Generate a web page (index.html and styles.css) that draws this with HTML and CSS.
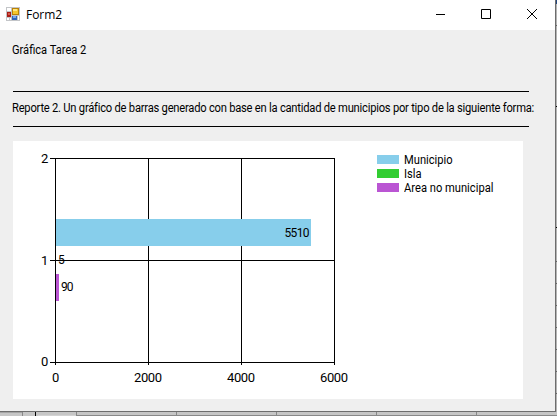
FILE: index.html
```html
<!DOCTYPE html>
<html lang="es">
<head>
<meta charset="utf-8">
<title>Form2</title>
<link rel="stylesheet" href="styles.css">
</head>
<body>
<div class="desktop">
  <main class="window">
    <header class="titlebar">
      <svg class="app-icon" width="14" height="14" viewBox="0 0 14 14" shape-rendering="crispEdges">
        <path fill="#c3c5c8" d="M0 0h14v14H0z"/>
        <path fill="#fff" d="M1 1h4v3H1zM1 11h2v2H1zM4 11h1v2H4zM12 9h1v4h-1z"/>
        <path fill="#a91d16" d="M1 5h4v5H1z"/>
        <path fill="#d6594a" d="M2 6h2v2H2z"/>
        <path fill="#b98108" d="M6 1h7v7H6z"/>
        <path fill="#f4c52d" d="M7 2h5v5H7z"/>
        <path fill="#ffe680" d="M7 2h4v2H7z"/>
        <path fill="#2f64bb" d="M6 9h5v4H6z"/>
        <path fill="#79a7ea" d="M7 9h3v2H7z"/>
      </svg>
      <h1 class="title">Form2</h1>
      <div class="controls">
        <svg width="10" height="10" viewBox="0 0 10 10"><path d="M1 5.5h9"/></svg>
        <svg width="10" height="10" viewBox="0 0 10 10"><path d="M.5.5h9v9h-9z"/></svg>
        <svg width="10" height="10" viewBox="0 0 10 10"><path d="M0 0l10 10M10 0L0 10"/></svg>
      </div>
    </header>
    <p class="heading"><span class="narrow">Gráfica Tarea 2</span></p>
    <p class="report"><span class="narrow">Reporte 2. Un gráfico de barras generado con base en la cantidad de municipios por tipo de la siguiente forma:</span></p>
    <section class="panel">
      <svg class="chart" width="350" height="258" viewBox="13 141 350 258">
        <g class="grid">
          <path d="M50 158.5h285M50 260.5h285M50 362.5h285M55.5 158v207M148.5 158v207M241.5 158v207M334.5 158v207"/>
        </g>
        <path class="municipio" d="M56 219h255v27H56z"/>
        <path class="area" d="M56 274h3v27h-3z"/>
        <g class="axis">
          <text x="41" y="163">2</text>
          <text x="41" y="265">1</text>
          <text x="41" y="366">0</text>
          <text x="52" y="382">0</text>
          <text x="134" y="382" textLength="28">2000</text>
          <text x="227" y="382" textLength="28">4000</text>
          <text x="320" y="382" textLength="28">6000</text>
        </g>
        <g class="value">
          <text x="284.5" y="237" textLength="25">5510</text>
          <text x="58" y="264">5</text>
          <text x="61" y="291" textLength="12.5">90</text>
        </g>
      </svg>
      <ul class="legend">
        <li><i class="swatch municipio"></i><span class="narrow">Municipio</span></li>
        <li><i class="swatch isla"></i><span class="narrow">Isla</span></li>
        <li><i class="swatch area"></i><span class="narrow">Area no municipal</span></li>
      </ul>
    </section>
  </main>
  <svg class="right-edge" width="1" height="412" viewBox="0 0 1 412" shape-rendering="crispEdges">
    <path fill="#b4b4b4" d="M0 0h1v412H0z"/>
    <path fill="#24477f" d="M0 0h1v4H0z"/>
    <path fill="#666" d="M0 25h1v1H0zM0 261h1v1H0zM0 283h1v1H0zM0 305h1v1H0zM0 327h1v1H0zM0 349h1v1H0zM0 371h1v1H0zM0 393h1v1H0z"/>
    <path fill="#000" d="M0 106h1v1H0zM0 227h1v1H0z"/>
  </svg>
  <svg class="bottom-edge" width="557" height="4" viewBox="0 0 557 4" shape-rendering="crispEdges">
    <path fill="#c6c6c6" d="M0 0h557v4H0z"/>
    <path fill="#a5a5a5" d="M0 0h22v1H0z"/>
    <path fill="#d2d2d2" d="M38 3h38v1H38z"/>
    <path fill="#888" d="M22 0h1v4h-1zM76 0h1v4h-1zM176 0h1v4h-1zM276 0h1v4h-1zM376 0h1v4h-1zM476 0h1v4h-1zM76 3h481v1H76z"/>
    <path fill="#000" d="M35 0h1v4h-1z"/>
  </svg>
</div>
</body>
</html>
```
FILE: styles.css
```css
* { box-sizing: border-box; }
body { margin: 0; overflow: hidden; font-family: Roboto, "Liberation Sans", sans-serif; color: #000; }
svg { display: block; }
.desktop { display: grid; grid-template-columns: 556px 1px; grid-template-rows: 412px 4px; width: 557px; height: 416px; }
.bottom-edge { grid-column: 1 / 3; }
.window { background: #efefef; border-right: 1px solid #6d6d6d; border-bottom: 1px solid #6d6d6d; }
.titlebar { display: flex; align-items: center; height: 30px; padding: 0 18px 0 6px; background: #fff; }
.app-icon { margin-bottom: 2px; }
.title { margin: 0 0 0 6px; font: 12px/16px "Open Sans", sans-serif; letter-spacing: -.05px; }
.controls { display: flex; gap: 36px; margin-left: auto; padding-bottom: 2px; }
.controls path { fill: none; stroke: #000; }
.narrow { display: inline-block; transform-origin: 0 50%; transform: scaleX(.93); }
.heading { margin: 12px 0 0 12px; font-size: 12px; line-height: 16px; }
.heading .narrow { transform: scaleX(.925); }
.report { width: 516px; height: 36px; margin: 33px 0 0 13px; border-top: 1px solid #000; border-bottom: 1px solid #000; font-size: 12px; line-height: 33px; letter-spacing: -.25px; white-space: nowrap; }
.report .narrow { margin-left: -1px; transform: scaleX(.932); }
.panel { display: flex; width: 510px; height: 258px; margin: 14px 0 0 13px; background: #fff; }
.grid path { fill: none; stroke: #000; }
.axis { font-size: 13px; }
.value { font-size: 12px; }
.municipio { fill: #87ceeb; background: #87ceeb; }
.isla { background: #32cd32; }
.area { fill: #ba55d3; background: #ba55d3; }
.legend { margin: 12px 0 0 14px; padding: 0; list-style: none; font-size: 12px; line-height: 14px; }
.legend li { display: flex; align-items: center; gap: 5px; height: 14px; white-space: nowrap; }
.swatch { width: 22px; height: 9px; margin-bottom: 1px; }
```
